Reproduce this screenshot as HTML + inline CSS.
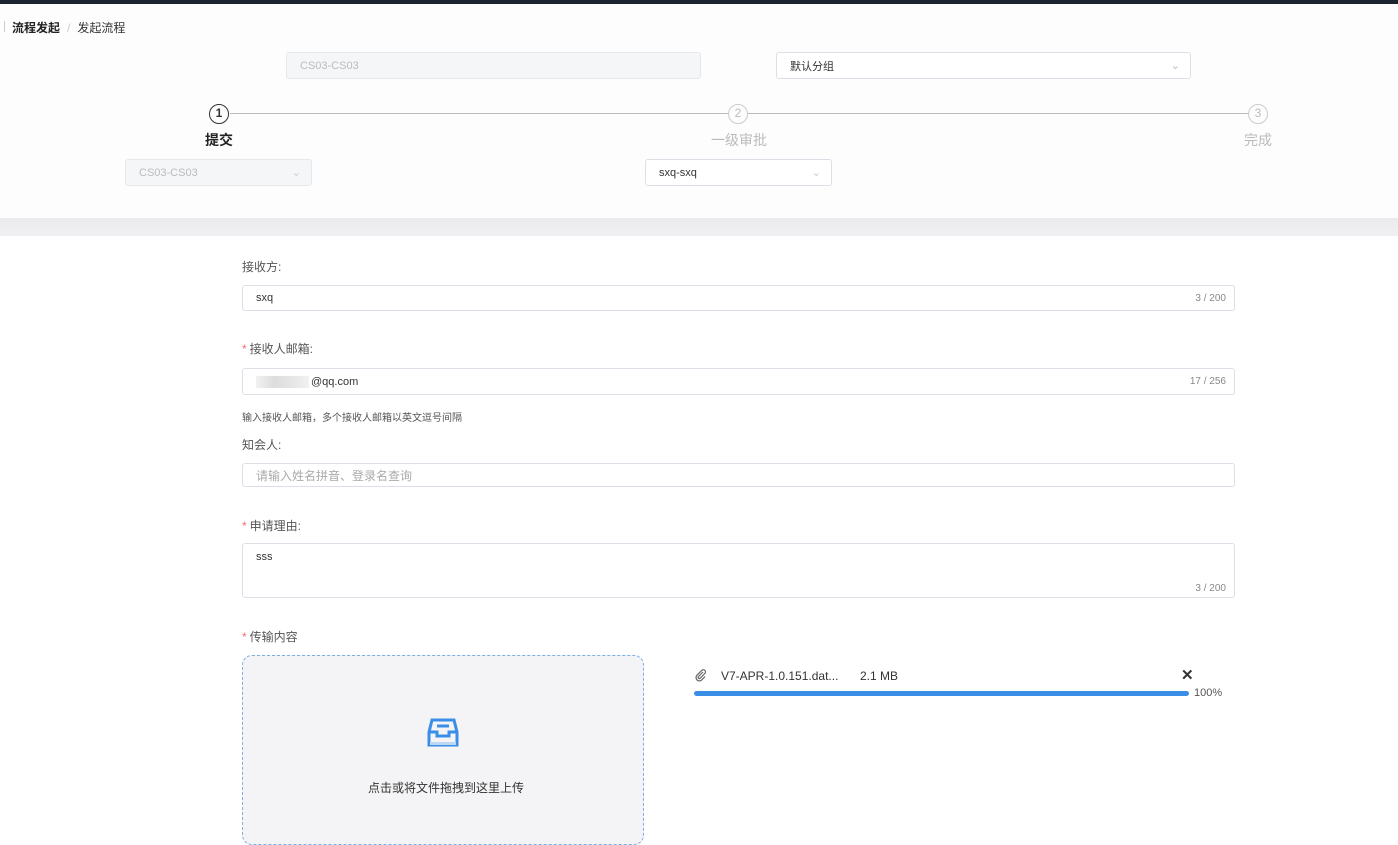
<!DOCTYPE html>
<html><head><meta charset="utf-8"><style>
*{box-sizing:border-box;margin:0;padding:0}
body{width:1398px;height:837px;overflow:hidden;background:#fff;font-family:"Liberation Sans","Noto Sans CJK SC",sans-serif;color:#333;position:relative;font-size:12px}
.a{position:absolute}
.inp{position:absolute;border:1px solid #dcdfe6;border-radius:3px;background:#fff;font-size:11px;padding-left:13px;display:flex;align-items:center}
.cnt{position:absolute;right:8px;font-size:10px;color:#888}
.lbl{position:absolute;left:242px;font-size:12px;color:#555}
.req{color:#f56c6c;margin-right:3px}
.circ{position:absolute;width:20px;height:20px;border:1.5px solid #333;border-radius:50%;font-size:12px;font-weight:bold;text-align:center;line-height:17px;background:#fdfdfe}
</style></head><body>
<div class="a" style="left:0;top:0;width:1398px;height:4px;background:#1c2330"></div>
<div class="a" style="left:0;top:4px;width:1398px;height:214px;background:#fdfdfe"></div>
<div class="a" style="left:0;top:218px;width:1398px;height:18px;background:linear-gradient(#ebebee,#f0f0f3)"></div>
<div class="a" style="left:4px;top:21px;width:1px;height:11px;background:#ccc"></div>
<div class="a" style="left:12px;top:19px;font-size:12px;"><b style="color:#222">流程发起</b><span style="color:#ccc;margin:0 7px">/</span>发起流程</div>
<div class="inp" style="left:286px;top:52px;width:415px;height:27px;background:#f5f6f8;color:#bbb;border-color:#e6e8ec">CS03-CS03</div>
<div class="inp" style="left:776px;top:52px;width:415px;height:27px;color:#333">默认分组<span style="position:absolute;right:10px;color:#bbb">⌄</span></div>
<div class="a" style="left:230px;top:113px;width:1018px;height:1px;background:#bbb"></div>
<div class="circ" style="left:209px;top:104px">1</div>
<div class="circ" style="left:728px;top:104px;border-color:#ccc;color:#bbb;font-weight:normal">2</div>
<div class="circ" style="left:1248px;top:104px;border-color:#ccc;color:#bbb;font-weight:normal">3</div>
<div class="a" style="left:205px;top:130px;font-size:14px;font-weight:bold;color:#222">提交</div>
<div class="a" style="left:711px;top:130px;font-size:14px;color:#bbb">一级审批</div>
<div class="a" style="left:1244px;top:130px;font-size:14px;color:#bbb">完成</div>
<div class="inp" style="left:125px;top:159px;width:187px;height:27px;background:#f5f6f8;color:#bbb;border-color:#e6e8ec">CS03-CS03<span style="position:absolute;right:10px;color:#ccc">⌄</span></div>
<div class="inp" style="left:645px;top:159px;width:187px;height:27px;color:#333">sxq-sxq<span style="position:absolute;right:10px;color:#ccc">⌄</span></div>

<div class="lbl" style="top:258px">接收方:</div>
<div class="inp" style="left:242px;top:285px;width:993px;height:26px">sxq<span class="cnt">3 / 200</span></div>
<div class="lbl" style="top:340px"><span class="req">*</span>接收人邮箱:</div>
<div class="inp" style="left:242px;top:368px;width:993px;height:27px"><span style="display:inline-block;width:53px;height:12px;background:linear-gradient(90deg,#f2f2f2,#ddd,#e5e5e5,#f2f2f2);margin-right:2px"></span>@qq.com<span class="cnt">17 / 256</span></div>
<div class="a" style="left:242px;top:409px;font-size:10px;color:#555">输入接收人邮箱，多个接收人邮箱以英文逗号间隔</div>
<div class="lbl" style="top:436px">知会人:</div>
<div class="inp" style="left:242px;top:463px;width:993px;height:24px;color:#aaa;font-size:12px">请输入姓名拼音、登录名查询</div>
<div class="lbl" style="top:517px"><span class="req">*</span>申请理由:</div>
<div class="inp" style="left:242px;top:543px;width:993px;height:55px;align-items:flex-start;padding-top:7px">sss<span class="cnt" style="bottom:3px">3 / 200</span></div>
<div class="lbl" style="top:628px"><span class="req">*</span>传输内容</div>
<div class="a" style="left:242px;top:655px;width:402px;height:190px;border:1px dashed #7ab0e6;border-radius:10px;background:#f4f4f6"></div>
<svg class="a" style="left:425px;top:717px" width="36" height="32" viewBox="0 0 36 32"><path d="M7 3h22l3 12v13H4V15z" fill="none" stroke="#3a8ee6" stroke-width="3"/><path d="M4 15h8v4h12v-4h8" fill="none" stroke="#3a8ee6" stroke-width="3"/><path d="M12 9h12" stroke="#3a8ee6" stroke-width="3"/><rect x="5" y="25" width="26" height="3" fill="#bcd8f5"/></svg>
<div class="a" style="left:368px;top:779px;font-size:12px;color:#333">点击或将文件拖拽到这里上传</div>
<svg class="a" style="left:695px;top:669px" width="12" height="13" viewBox="0 0 12 13"><path d="M8 3L3.5 7.5a1.2 1.2 0 0 0 1.7 1.7L10 4.4a2.2 2.2 0 0 0-3.1-3.1L2 6.2a3.3 3.3 0 0 0 4.7 4.7L10 7.6" fill="none" stroke="#666" stroke-width="1.2"/></svg>
<div class="a" style="left:721px;top:669px;font-size:12px;color:#333">V7-APR-1.0.151.dat...</div>
<div class="a" style="left:860px;top:669px;font-size:12px;color:#333">2.1 MB</div>
<div class="a" style="left:1181px;top:666px;font-size:15px;color:#333;font-weight:bold">✕</div>
<div class="a" style="left:694px;top:691px;width:495px;height:5px;border-radius:3px;background:#3a8ee6"></div>
<div class="a" style="left:1194px;top:687px;font-size:11px;color:#555">100%</div>
</body></html>
